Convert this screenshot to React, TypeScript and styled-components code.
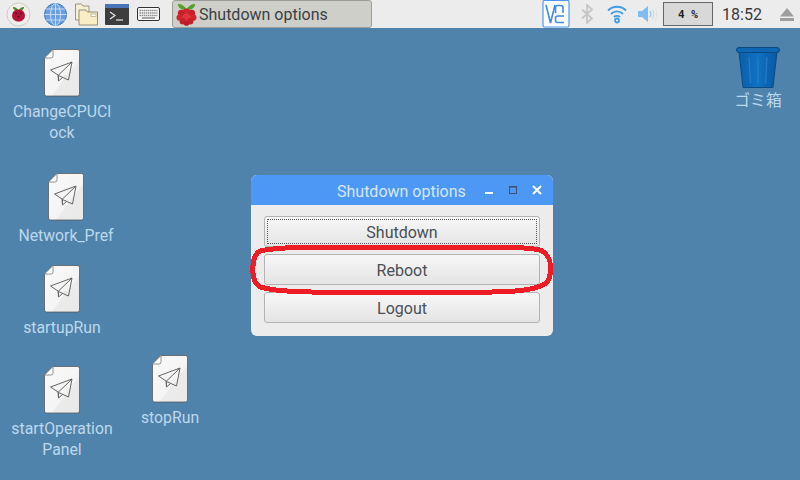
import React from "react";
import styled, { createGlobalStyle } from "styled-components";

const Global = createGlobalStyle`
  html, body { margin: 0; padding: 0; width: 800px; height: 480px; overflow: hidden; background: #5083ac; }
  #root { width: 800px; height: 480px; }
  * { box-sizing: border-box; }
`;

const Screen = styled.div`
  width: 800px; height: 480px; display: flex; flex-direction: column;
  font-family: Roboto, "Noto Sans CJK JP", sans-serif;
`;
const Taskbar = styled.div`
  height: 28px; background: #edecec; display: flex; align-items: center; flex: none;
`;
const Launchers = styled.div`
  display: flex; align-items: center; width: 172px; height: 28px; flex: none;
`;
const Launcher = styled.div<{ $x: number }>`
  margin-left: ${p => p.$x}px; display: flex; flex: none;
`;
const TaskButton = styled.div`
  width: 200px; height: 28px; border: 1px solid #9d9d9a; border-radius: 3px;
  background: #cfcfca; display: flex; align-items: center; gap: 2px; padding-left: 3px;
  font-size: 16px; color: #3b3f45; flex: none;
`;
const Tray = styled.div`
  margin-left: auto; display: flex; align-items: center; height: 28px; padding-right: 6px;
`;
const TrayItem = styled.div<{ $x: number }>`
  margin-left: ${p => p.$x}px; display: flex; flex: none;
`;
const Cpu = styled.div`
  width: 50px; height: 24px; margin-left: 6px; border: 1px solid #666; background: #d8d8d8;
  font-family: "DejaVu Sans Mono", monospace; font-size: 11px; font-weight: 700; color: #222;
  display: flex; align-items: center; justify-content: center; white-space: pre; flex: none;
`;
const Clock = styled.div`
  margin-left: 4px; width: 50px; font-size: 16px; color: #3a3a3a; text-align: center; flex: none;
`;
const Desktop = styled.div`
  position: relative; flex: 1; background: #5083ac;
`;
const Item = styled.div<{ $x: number; $y: number; $w: number }>`
  position: absolute; left: ${p => p.$x}px; top: ${p => p.$y}px; width: ${p => p.$w}px;
  display: flex; flex-direction: column; align-items: center;
`;
const Label = styled.div<{ $gap?: number }>`
  margin-top: ${p => p.$gap ?? 4}px; font-size: 15.8px; line-height: 21px; color: #bcd8ec; text-align: center;
  width: 100%;
`;
const Win = styled.div`
  position: absolute; left: 251px; top: 147px; width: 302px; height: 161px;
  background: #edecec; border-radius: 6px; overflow: visible;
`;
const TitleBar = styled.div`
  height: 30px; background: #4d98f5; border-radius: 6px 6px 0 0; position: relative;
  display: flex; align-items: center; padding: 0 10px 0 86px; color: #d6e6fa; font-size: 16px;
`;
const TitleText = styled.div`
  width: 129px; white-space: nowrap; padding-top: 2px;
`;
const WinControls = styled.div`
  margin-left: auto; display: flex; align-items: center; gap: 12px;
`;
const Body = styled.div`
  padding: 11px 13px 0; display: flex; flex-direction: column; gap: 7px;
`;
const Btn = styled.div<{ $focus?: boolean }>`
  height: 31px; position: relative; border: 1px solid #b3b3b1; border-radius: 3px;
  background: linear-gradient(#f7f7f7, #e4e4e4); padding-top: 2px;
  display: flex; align-items: center; justify-content: center;
  color: #4a4f57; font-size: 16px;
  ${p => p.$focus ? `&::after { content: ""; position: absolute; inset: 2px; border: 1px dotted #555; }` : ""}
`;
const Ring = styled.svg`
  position: absolute; left: 0; top: 68px; overflow: visible; pointer-events: none;
`;

const Berry = () => (
  <svg width="21" height="25" viewBox="1.500 0.500 17 20">
    <path d="M10 6C8 3 5 1.500 3 2c0 3 3 5 7 5 4 0 7-2 7-5-2-.5-5 1-7 4z" fill="#5aa02c" />
    <circle cx="10" cy="8.500" r="2.800" fill="#d2242b" />
    <circle cx="5.800" cy="9.500" r="2.800" fill="#c8202a" />
    <circle cx="14.200" cy="9.500" r="2.800" fill="#c8202a" />
    <circle cx="4.500" cy="13" r="2.600" fill="#d2242b" />
    <circle cx="15.500" cy="13" r="2.600" fill="#d2242b" />
    <circle cx="10" cy="12.500" r="3" fill="#e0333a" />
    <circle cx="7" cy="16" r="2.600" fill="#c8202a" />
    <circle cx="13" cy="16" r="2.600" fill="#c8202a" />
    <circle cx="10" cy="17.500" r="2.200" fill="#b81d25" />
  </svg>
);

const PageIcon = () => (
  <svg width="36" height="48" viewBox="0 0 36 48">
    <defs>
      <linearGradient id="pg" x1="0" y1="0" x2="1" y2="1">
        <stop offset="0" stopColor="#fafafa" />
        <stop offset="0.6" stopColor="#f4f4f4" />
        <stop offset="0.61" stopColor="#ebebeb" />
        <stop offset="1" stopColor="#e9e9e9" />
      </linearGradient>
    </defs>
    <path d="M9 .5H33.500a2 2 0 0 1 2 2V45a2 2 0 0 1-2 2H2.500a2 2 0 0 1-2-2V9z" fill="url(#pg)" stroke="#555" strokeWidth="1" strokeOpacity="0.75" />
    <path d="M9 .5V7a2 2 0 0 1-2 2H.5z" fill="#fff" stroke="#777" strokeWidth="0.8" />
    <path d="M6.500 21L28 13 24.500 31 14.500 26.500 14.500 32 14 26zM14 26.500L28 13M18.500 28.500L14.500 32" fill="none" stroke="#666" strokeWidth="1" strokeLinejoin="round" />
  </svg>
);

const Desk = ({ x, y, w, lines, gap }: { x: number; y: number; w: number; lines: string[]; gap?: number }) => (
  <Item $x={x} $y={y} $w={w}>
    <PageIcon />
    <Label $gap={gap}>{lines.map(l => <div key={l}>{l}</div>)}</Label>
  </Item>
);

export default function App() {
  return (
    <Screen>
      <Global />
      <Taskbar>
        <Launchers>
          <Launcher $x={6}>
            <svg width="25" height="25" viewBox="0 0 25 25">
              <circle cx="12.500" cy="12.500" r="11.500" fill="#f1efec" stroke="#cfcac6" strokeWidth="1" />
              <g transform="translate(4.500 3.500) scale(0.8)">
                <path d="M10 6C8 3 5 1.500 3 2c0 3 3 5 7 5 4 0 7-2 7-5-2-.5-5 1-7 4z" fill="#4f8f2c" />
                <path d="M10 5c5 0 8 3 8 8 0 4-4 7-8 7s-8-3-8-7c0-5 3-8 8-8z" fill="#b5123a" />
                <circle cx="7" cy="10" r="1.200" fill="#5e0a20" />
                <circle cx="13" cy="10" r="1.200" fill="#5e0a20" />
                <circle cx="10" cy="14" r="1.200" fill="#5e0a20" />
              </g>
            </svg>
          </Launcher>
          <Launcher $x={13}>
            <svg width="23" height="23" viewBox="0 0 23 23">
              <circle cx="11.500" cy="11.500" r="11" fill="#6b9fe0" stroke="#3f76c0" />
              <g fill="none" stroke="#cfe0f6" strokeWidth="0.9">
                <ellipse cx="11.500" cy="11.500" rx="5" ry="11" />
                <path d="M11.500 .5v22M.5 11.500h22M2 6h19M2 17h19" />
              </g>
            </svg>
          </Launcher>
          <Launcher $x={7}>
            <svg width="25" height="23" viewBox="0 0 25 23">
              <path d="M1.500 1h6l1.500 2h6v14h-13.500z" fill="#f6efd2" stroke="#9b9580" />
              <path d="M5 7h7l1.500 2h10v13H5z" fill="#f8edc4" stroke="#948e78" />
              <rect x="17" y="11" width="5" height="2.500" fill="#fff" stroke="#9b9580" strokeWidth="0.6" />
            </svg>
          </Launcher>
          <Launcher $x={6}>
            <svg width="24" height="21" viewBox="0 0 24 21">
              <rect width="24" height="21" rx="1" fill="#3d3d3d" />
              <rect width="24" height="4" fill="#4a74b8" />
              <path d="M5 8l5 3.500L5 15" fill="none" stroke="#e8e8e8" strokeWidth="1.200" />
              <path d="M11 16h7" stroke="#e8e8e8" strokeWidth="1.200" />
            </svg>
          </Launcher>
          <Launcher $x={8}>
            <svg width="23" height="14" viewBox="0 0 23 14">
              <rect x=".5" y=".5" width="22" height="13" rx="1.500" fill="#fafafa" stroke="#333" />
              <path d="M2.500 3.500h18M2.500 6h18M2.500 8.500h18" stroke="#8a8a8a" strokeWidth="1.500" strokeDasharray="1.500 .6" />
              <path d="M5 11h13" stroke="#8a8a8a" strokeWidth="1.500" />
            </svg>
          </Launcher>
        </Launchers>
        <TaskButton>
          <Berry />
          <span>Shutdown options</span>
        </TaskButton>
        <Tray>
          <TrayItem $x={0}>
            <svg width="28" height="28" viewBox="0 0 28 28">
              <rect x="1" y=".5" width="26" height="26.500" rx="1.500" fill="#fff" stroke="#4d98f5" strokeWidth="1.200" />
              <path d="M4 5l4.500 18L13 5" fill="none" stroke="#3d8ae8" strokeWidth="1.600" />
              <path d="M13.500 13V7.500q0-2 2-2h3q2.500 0 2.500 2V13" fill="none" stroke="#3d8ae8" strokeWidth="1.600" />
              <path d="M22 16h-6q-2.500 0-2.500 2v2.500q0 2 2.500 2h6" fill="none" stroke="#3d8ae8" strokeWidth="1.600" />
            </svg>
          </TrayItem>
          <TrayItem $x={11}>
            <svg width="12" height="20" viewBox="0 0 12 20">
              <path d="M1 5.500l10 9-5 4.500V1l5 4.500-10 9" fill="none" stroke="#c6c6c6" strokeWidth="1.800" />
            </svg>
          </TrayItem>
          <TrayItem $x={14}>
            <svg width="20" height="20" viewBox="0 0 20 20">
              <g fill="none" stroke="#3f9ce6" strokeWidth="1.800">
                <path d="M1 6.500C6 1.500 14 1.500 19 6.500" />
                <path d="M4 10C7.500 6.500 12.500 6.500 16 10" />
                <path d="M7 13C8.500 11.500 11.500 11.500 13 13" />
                <circle cx="10" cy="16.500" r="2" />
              </g>
            </svg>
          </TrayItem>
          <TrayItem $x={11}>
            <svg width="19" height="16" viewBox="0 0 19 16">
              <path d="M0 5h4l6-5v16l-6-5H0z" fill="#7fbdf0" />
              <path d="M12 5q2 3 0 6" fill="none" stroke="#8fc4ef" strokeWidth="1.200" />
              <path d="M14.500 3q3 5 0 10" fill="none" stroke="#c6d8e6" strokeWidth="1" />
              <path d="M17 1.500q3.500 6.500 0 13" fill="none" stroke="#dfe3e6" strokeWidth="1" />
            </svg>
          </TrayItem>
          <Cpu>4 %</Cpu>
          <Clock>18:52</Clock>
          <TrayItem $x={13}>
            <svg width="14" height="13" viewBox="0 0 14 13">
              <path d="M7 0l7 8.500H0z" fill="#9e9e9e" />
              <rect y="10" width="14" height="3" fill="#9e9e9e" />
            </svg>
          </TrayItem>
        </Tray>
      </Taskbar>
      <Desktop>
        <Desk x={2} y={21} w={120} lines={["ChangeCPUCl", "ock"]} gap={4} />
        <Desk x={6} y={145} w={120} lines={["Network_Pref"]} gap={4} />
        <Desk x={2} y={237} w={120} lines={["startupRun"]} gap={4} />
        <Desk x={2} y={338} w={120} lines={["startOperation", "Panel"]} gap={4} />
        <Desk x={109} y={327} w={122} lines={["stopRun"]} gap={4} />
        <Item $x={708} $y={19} $w={100}>
          <svg width="44" height="41" viewBox="0 0 44 41">
            <defs>
              <linearGradient id="bin" x1="0" x2="1" y1="0" y2="0">
                <stop offset="0" stopColor="#0a5fa8" />
                <stop offset="0.5" stopColor="#0f72c4" />
                <stop offset="1" stopColor="#0a58a0" />
              </linearGradient>
            </defs>
            <path d="M3 5h38l-4 35.500H7z" fill="url(#bin)" stroke="#0a4c86" />
            <path d="M13 10l1.500 26M22 10v26M31 10l-1.500 26" stroke="#2a80c8" strokeWidth="1" fill="none" />
            <rect x=".5" y=".5" width="43" height="5" rx="2.500" fill="#0e67b3" stroke="#0a4a80" />
          </svg>
          <Label $gap={2}>ゴミ箱</Label>
        </Item>
        <Win>
          <TitleBar>
            <TitleText>Shutdown options</TitleText>
            <WinControls>
              <svg width="12" height="12" viewBox="0 0 12 12"><rect x="2" y="8" width="8" height="2" fill="#fff" /></svg>
              <svg width="12" height="12" viewBox="0 0 12 12"><rect x="2.500" y="2.500" width="7" height="7" fill="none" stroke="#42526a" strokeWidth="1" /><rect x="2" y="2" width="8" height="2" fill="#42526a" opacity="0.6" /></svg>
              <svg width="12" height="12" viewBox="0 0 12 12"><path d="M2 2l8 8M10 2l-8 8" stroke="#fff" strokeWidth="2" /></svg>
            </WinControls>
          </TitleBar>
          <Body>
            <Btn $focus>Shutdown</Btn>
            <Btn>Reboot</Btn>
            <Btn>Logout</Btn>
          </Body>
          <Ring width="302" height="54" viewBox="0 0 302 54">
            <path d="M9 8 C22 5 40 4.500 56 4.300 L256 4.300 C270 4.500 282 5.500 289 7 C296 10 299.500 17 299.500 24 C299.500 34 298 39 292 42 C284 46 270 48 256 48.500 C220 50 185 50 149 50 C115 50 80 50 46 48.500 C30 48 18 46.500 9 44 C4 41 1.800 34 1.800 27 C1.800 18 4 10.500 9 8 Z" fill="none" stroke="#ee1c25" strokeWidth="5" shapeRendering="crispEdges" />
          </Ring>
        </Win>
      </Desktop>
    </Screen>
  );
}
